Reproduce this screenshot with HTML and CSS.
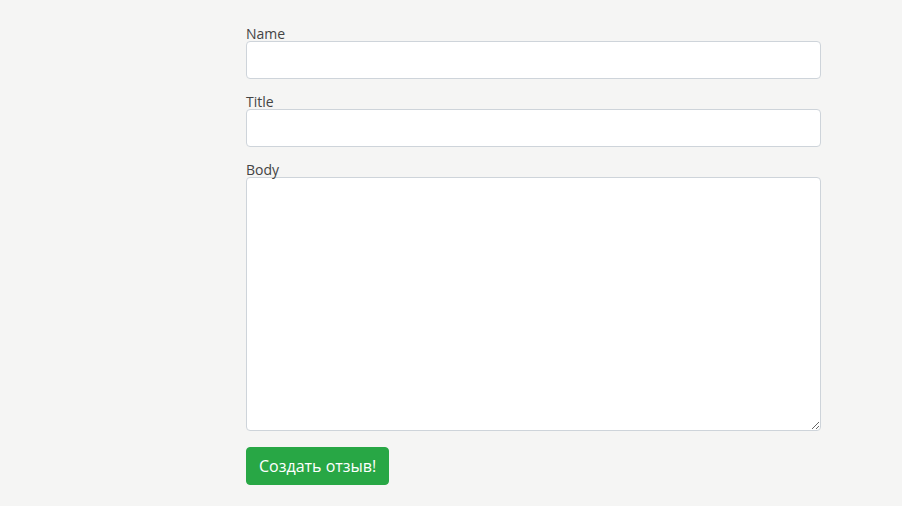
FILE: index.html
```html
<!DOCTYPE html>
<html lang="en">
<head>
    <meta charset="UTF-8">
    <meta name="viewport" content="width=device-width, initial-scale=1.0">
    <title>New review</title>
    <link rel="stylesheet" href="styles.css">
</head>
<body>
    <div class="page">
        <form class="review-form">
            <div class="form-group">
                <label for="name">Name</label>
                <input type="text" id="name" class="form-control">
            </div>
            <div class="form-group">
                <label for="title">Title</label>
                <input type="text" id="title" class="form-control">
            </div>
            <div class="form-group">
                <label for="body">Body</label>
                <textarea id="body" class="form-control body-field"></textarea>
            </div>
            <button type="submit" class="btn-submit">Создать отзыв!</button>
        </form>
    </div>
</body>
</html>
```

FILE: styles.css
```css
body {
    margin: 0;
    background-color: #f5f5f4;
    font-family: "Open Sans", Arial, sans-serif;
    color: #444;
}
.page {
    padding: 27px 0 0 246px;
}
.review-form {
    width: 575px;
}
.form-group {
    margin-bottom: 16px;
}
.form-group label {
    display: block;
    font-size: 14px;
    line-height: 14px;
}
.form-control {
    display: block;
    box-sizing: border-box;
    width: 100%;
    height: 38px;
    margin: 0;
    padding: 6px 12px;
    font-family: inherit;
    font-size: 16px;
    background-color: #fff;
    border: 1px solid #ced4da;
    border-radius: 4px;
}
.body-field {
    height: 254px;
    resize: vertical;
}
.btn-submit {
    display: block;
    height: 38px;
    padding: 0 12px;
    font-family: inherit;
    font-size: 16px;
    color: #fff;
    background-color: #28a745;
    border: 1px solid #28a745;
    border-radius: 4px;
    cursor: pointer;
}
```
